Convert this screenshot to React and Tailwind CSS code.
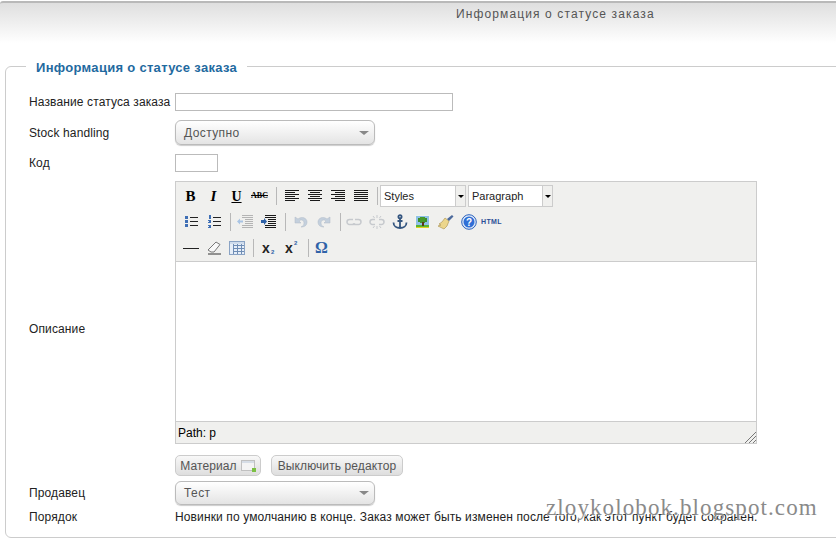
import React from 'react';

const Btn = ({ children }) => (
  <div className="w-[23px] h-[26px] flex items-center justify-center shrink-0">{children}</div>
);

const Sep = ({ w = 'mr-[3px]' }) => <div className={`ml-[5px] w-px h-[18px] bg-[#b8b8b8] shrink-0 ${w}`} />;

const Lines = ({ rows }) => (
  <svg width="16" height="14" viewBox="0 0 16 14" shapeRendering="crispEdges">
    {rows.map((r, i) => (
      <rect key={i} x={r[0]} y={i * 2 + 1} width={r[1]} height="1" fill="#1a1a1a" />
    ))}
  </svg>
);

const listLines = (
  <>
    <rect x="7" y="2" width="8" height="1" fill="#222" />
    <rect x="7" y="6" width="8" height="1" fill="#222" />
    <rect x="7" y="10" width="8" height="1" fill="#222" />
  </>
);

const Bullist = () => (
  <svg width="16" height="14" viewBox="0 0 16 14" shapeRendering="crispEdges">
    <rect x="2" y="1" width="3" height="3" fill="#3f6fb5" />
    <rect x="2" y="5" width="3" height="3" fill="#3f6fb5" />
    <rect x="2" y="9" width="3" height="3" fill="#3f6fb5" />
    {listLines}
  </svg>
);

const Numlist = () => (
  <svg width="16" height="14" viewBox="0 0 16 14" shapeRendering="crispEdges">
    <rect x="3" y="0" width="2" height="4" fill="#3f6fb5" />
    <rect x="2" y="5" width="3" height="1" fill="#3f6fb5" />
    <rect x="3" y="6" width="2" height="1" fill="#3f6fb5" />
    <rect x="2" y="7" width="3" height="1" fill="#3f6fb5" />
    <rect x="2" y="10" width="3" height="1" fill="#3f6fb5" />
    <rect x="3" y="11" width="2" height="1" fill="#3f6fb5" />
    <rect x="2" y="12" width="3" height="1" fill="#3f6fb5" />
    {listLines}
  </svg>
);

const Indent = ({ dim, flip }) => {
  const c = dim ? '#b4b4b4' : '#1a1a1a';
  return (
    <svg width="18" height="16" viewBox="0 0 18 16" shapeRendering="crispEdges">
      {[1, 3, 5, 7, 9, 11, 13].map((y, i) => (
        <rect key={y} x={i > 1 && i < 5 ? 8 : 5} y={y} width={i > 1 && i < 5 ? 8 : 11} height="1" fill={c} />
      ))}
      <path d={flip ? 'M6 6.500h-3v-2l-3 3 3 3v-2h3z' : 'M1 6h3v-2l3 3.500-3 3.500v-2h-3z'} fill={dim ? '#a9c4e4' : '#2f62a8'} shapeRendering="auto" />
    </svg>
  );
};

const Undo = ({ redo }) => (
  <svg width="16" height="16" viewBox="0 0 16 16" className={redo ? '-scale-x-100' : ''}>
    <path d="M2 3v6h6l-2-2c2-2 5-1 5 2 0 2-1 3-3 4 4 0 6-2 6-5 0-4-5-6-9-3z" fill="#c4d0dd" stroke="#b0bac6" strokeWidth=".5" />
  </svg>
);

const LinkIco = ({ broken }) => (
  <svg width="16" height="16" viewBox="0 0 16 16" fill="none" stroke="#c6c9cd" strokeWidth="1.500">
    {broken ? (
      <>
        <path d="M6 5.500h-2.500a2.500 2.500 0 0 0 0 5h2.500M10 5.500h2.500a2.500 2.500 0 0 1 0 5h-2.500" />
        <path d="M8 1v3M4 2l1.500 2M12 2l-1.500 2M8 12v3M4 14l1.500-2M12 14l-1.500-2" strokeWidth="1" />
      </>
    ) : (
      <>
        <path d="M7 5.500h-3.500a2.500 2.500 0 0 0 0 5h3.500a2.500 2.500 0 0 0 2-1" />
        <path d="M9 5.500h3.500a2.500 2.500 0 0 1 0 5h-3.500a2.500 2.500 0 0 1-2-1" />
      </>
    )}
  </svg>
);

const Anchor = () => (
  <svg width="16" height="16" viewBox="0 0 16 16" fill="none" stroke="#34557f" strokeWidth="1.800">
    <circle cx="8" cy="2.800" r="1.600" />
    <path d="M8 4.500v9.500M5.500 7h5M1.500 8.500c0 3.500 3 5.500 6.500 5.500s6.500-2 6.500-5.500" />
  </svg>
);

const ImageIco = () => (
  <svg width="15" height="15" viewBox="0 0 15 15" shapeRendering="crispEdges">
    <rect width="15" height="15" fill="#f2f6ec" />
    <rect x="1" y="1" width="13" height="9" fill="#8fc0e6" />
    <rect x="1" y="10" width="13" height="3" fill="#5bb52f" />
    <rect x="1" y="12" width="13" height="1" fill="#e0d020" />
    <rect x="3" y="3" width="9" height="4" fill="#3d8f28" />
    <rect x="5" y="2" width="5" height="6" fill="#46992c" />
    <rect x="7" y="7" width="2" height="4" fill="#5b3a1a" />
  </svg>
);

const Clean = () => (
  <svg width="17" height="16" viewBox="0 0 17 16">
    <path d="M8 4l4 3-2 5-3 3-6-3 3-1-2-1 3-2z" fill="#ecd68c" stroke="#a88f4a" strokeWidth=".6" />
    <path d="M10 5l5-4 1.500 1.500-4.500 4.500z" fill="#4c6a9c" />
  </svg>
);

const Help = () => (
  <svg width="16" height="16" viewBox="0 0 16 16">
    <circle cx="8" cy="8" r="7.300" fill="#dfe9f7" stroke="#2b62bd" />
    <circle cx="8" cy="8" r="5.500" fill="#2f6fd6" />
    <text x="8" y="11.500" textAnchor="middle" fontSize="10" fontWeight="700" fontFamily="Liberation Sans" fill="#fff">?</text>
  </svg>
);

const Hr = () => <div className="w-[16px] h-px bg-[#222]" />;

const Eraser = () => (
  <svg width="16" height="14" viewBox="0 0 16 14">
    <path d="M10 1l4 2.500-6 7.500h-3l-3-2z" fill="#f8f8f8" stroke="#777" />
    <path d="M2 13h13" stroke="#333" />
  </svg>
);

const TableIco = () => (
  <svg width="16" height="14" viewBox="0 0 16 14" shapeRendering="crispEdges">
    <rect x=".5" y=".5" width="15" height="13" fill="#e6eef8" stroke="#8aa3c4" />
    <rect x="1" y="1" width="14" height="2" fill="#cfdcec" />
    {[4, 7, 10].map((y) => <rect key={y} x="4" y={y} width="11" height="1" fill="#6f8db5" />)}
    {[4, 8, 12].map((x) => <rect key={x} x={x} y="3" width="1" height="10" fill="#6f8db5" />)}
  </svg>
);

const Script = ({ sub }) => (
  <span className="relative -ml-[5px] font-bold text-[14px] leading-none text-[#222] font-['Liberation_Sans',sans-serif]">
    x
    <span className={`absolute left-[9px] text-[6px] text-[#2f62a8] ${sub ? 'top-[8px]' : '-top-px'}`}>2</span>
  </span>
);

const MceSelect = ({ label, w }) => (
  <div className={`flex h-[22px] shrink-0 border border-[#ccc] bg-white ${w}`}>
    <span className="flex-1 pl-[3px] text-[11px] leading-[20px] text-[#222]">{label}</span>
    <span className="w-[10px] border-l border-[#ccc] bg-[#f0f0ee] flex items-center justify-center">
      <span className="border-x-[3px] border-t-[3px] border-x-transparent border-t-black" />
    </span>
  </div>
);

const Dropdown = ({ label, h }) => (
  <div className={`w-[200px] ${h} rounded-[6px] border border-[#bbb] bg-gradient-to-b from-white to-[#e4e4e4] flex items-center justify-between pl-[8px] pr-[5px] shadow-[0_1px_1px_#ccc]`}>
    <span className="text-[12px] text-[#555] tracking-[0.4px]">{label}</span>
    <span className="border-x-[5px] border-t-[4px] border-x-transparent border-t-[#888]" />
  </div>
);

const GrayButton = ({ children, w }) => (
  <div className={`${w} h-[21px] rounded-[5px] border border-[#ccc] bg-gradient-to-b from-[#f8f8f8] to-[#dedede] flex items-center justify-center gap-[4px] text-[12px] tracking-[0.1px] text-[#555]`}>
    {children}
  </div>
);

const Row = ({ label, className = '', children }) => (
  <div className={`flex items-center ${className}`}>
    <div className="w-[146px] shrink-0 text-[12px] tracking-[0.12px] text-[#222]">{label}</div>
    {children}
  </div>
);

export default function App() {
  return (
    <div className="relative w-[836px] h-[540px] overflow-hidden bg-white font-['Liberation_Sans',Arial,sans-serif]">
      <div className="mt-px h-[42px] rounded-tl-[3px] border-t-2 border-[#b9b9b9] bg-gradient-to-b from-[#dfdfdf] to-white pl-[456px] pt-[3px] text-[12px] leading-[16px] tracking-[1.12px] text-[#555]">
        Информация о статусе заказа
      </div>

      <fieldset className="mt-[13px] ml-[5px] w-[860px] h-[482px] rounded-[6px] border border-[#ccc] pl-[23px]">
        <legend className="-ml-[3px] px-[10px] pt-[4px] text-[13px] font-bold leading-[16px] tracking-[0.3px] text-[#1f6a9f]">
          Информация о статусе заказа
        </legend>

        <Row label="Название статуса заказа" className="mt-[17px] h-[18px]">
          <div className="w-[278px] h-[18px] border border-[#bbb] bg-white" />
        </Row>
        <Row label="Stock handling" className="mt-[9px] h-[25px]">
          <Dropdown label="Доступно" h="h-[25px]" />
        </Row>
        <Row label="Код" className="mt-[9px] h-[18px]">
          <div className="w-[43px] h-[18px] border border-[#bbb] bg-white" />
        </Row>

        <Row label="Описание" className="mt-[9px]">
          <div>
            <div className="w-[582px] h-[263px] border border-[#ccc] flex flex-col">
              <div className="h-[80px] bg-[#f0f0ee] border-b border-[#ccc] pt-px pl-[3px]">
                <div className="flex items-center h-[26px]">
                  <Btn><span className="font-['Liberation_Serif',serif] font-bold text-[15px] text-black">B</span></Btn>
                  <Btn><span className="font-['Liberation_Serif',serif] font-bold italic text-[15px] text-black">I</span></Btn>
                  <Btn><span className="font-['Liberation_Serif',serif] font-bold underline text-[14px] text-black">U</span></Btn>
                  <Btn><span className="font-['Liberation_Serif',serif] font-bold line-through text-[8px] text-black">ABC</span></Btn>
                  <Sep />
                  <Btn><Lines rows={[[1, 14], [1, 10], [1, 14], [1, 10], [1, 14], [1, 10]]} /></Btn>
                  <Btn><Lines rows={[[1, 14], [3, 10], [1, 14], [3, 10], [1, 14], [3, 10]]} /></Btn>
                  <Btn><Lines rows={[[1, 14], [5, 10], [1, 14], [5, 10], [1, 14], [5, 10]]} /></Btn>
                  <Btn><Lines rows={[[1, 14], [1, 14], [1, 14], [1, 14], [1, 14], [1, 14]]} /></Btn>
                  <Sep w="mr-[2px]" />
                  <MceSelect label="Styles" w="w-[86px]" />
                  <div className="w-[2px]" />
                  <MceSelect label="Paragraph" w="w-[85px]" />
                </div>
                <div className="flex items-center h-[26px]">
                  <Btn><Bullist /></Btn>
                  <Btn><Numlist /></Btn>
                  <Sep />
                  <Btn><Indent dim flip /></Btn>
                  <Btn><Indent /></Btn>
                  <Sep />
                  <Btn><Undo /></Btn>
                  <Btn><Undo redo /></Btn>
                  <Sep w="mr-px" />
                  <Btn><LinkIco /></Btn>
                  <Btn><LinkIco broken /></Btn>
                  <Btn><Anchor /></Btn>
                  <Btn><ImageIco /></Btn>
                  <Btn><Clean /></Btn>
                  <Btn><Help /></Btn>
                  <Btn><span className="text-[7px] font-bold tracking-[0.4px] text-[#2c4f96]">HTML</span></Btn>
                </div>
                <div className="flex items-center h-[26px]">
                  <Btn><Hr /></Btn>
                  <Btn><Eraser /></Btn>
                  <Btn><TableIco /></Btn>
                  <Sep />
                  <Btn><Script sub /></Btn>
                  <Btn><Script /></Btn>
                  <Sep w="mr-px" />
                  <Btn><span className="font-['Liberation_Serif',serif] font-bold text-[16px] text-[#2f62a8]">Ω</span></Btn>
                </div>
              </div>
              <div className="flex-1 bg-white" />
              <div className="h-[22px] bg-[#f0f0ee] border-t border-[#ccc] pl-[2px] flex items-center justify-between text-[12px] text-black">
                Path: p
                <svg width="11" height="11" viewBox="0 0 11 11" stroke="#777" className="self-end">
                  <path d="M0 11L11 0M4 11L11 4M8 11L11 8" />
                </svg>
              </div>
            </div>
            <div className="mt-[11px] flex gap-[10px]">
              <GrayButton w="w-[86px]">
                Материал
                <svg width="15" height="12" viewBox="0 0 15 12" shapeRendering="crispEdges">
                  <rect x=".5" y=".5" width="13" height="10" fill="#f4f4f4" stroke="#c0c0c0" />
                  <rect x="1" y="1" width="12" height="2" fill="#d6dde6" />
                  <rect x="11" y="8" width="4" height="4" fill="#7bc043" />
                </svg>
              </GrayButton>
              <GrayButton w="w-[132px]">Выключить редактор</GrayButton>
            </div>
          </div>
        </Row>

        <Row label="Продавец" className="mt-[5px]">
          <Dropdown label="Тест" h="h-[24px]" />
        </Row>
        <Row label="Порядок" className="mt-[3px] h-[18px]">
          <span className="text-[12px] tracking-[0.12px] text-[#222] whitespace-nowrap">Новинки по умолчанию в конце. Заказ может быть изменен после того, как этот пункт будет сохранен.</span>
        </Row>
      </fieldset>

      <span className="absolute left-[546px] top-[494px] font-['Liberation_Serif',serif] text-[23px] leading-[28px] tracking-[1.1px] text-[#8a8a8a] [text-shadow:1px_1px_0_rgba(255,255,255,0.8)]">
        zloykolobok.blogspot.com
      </span>
    </div>
  );
}
